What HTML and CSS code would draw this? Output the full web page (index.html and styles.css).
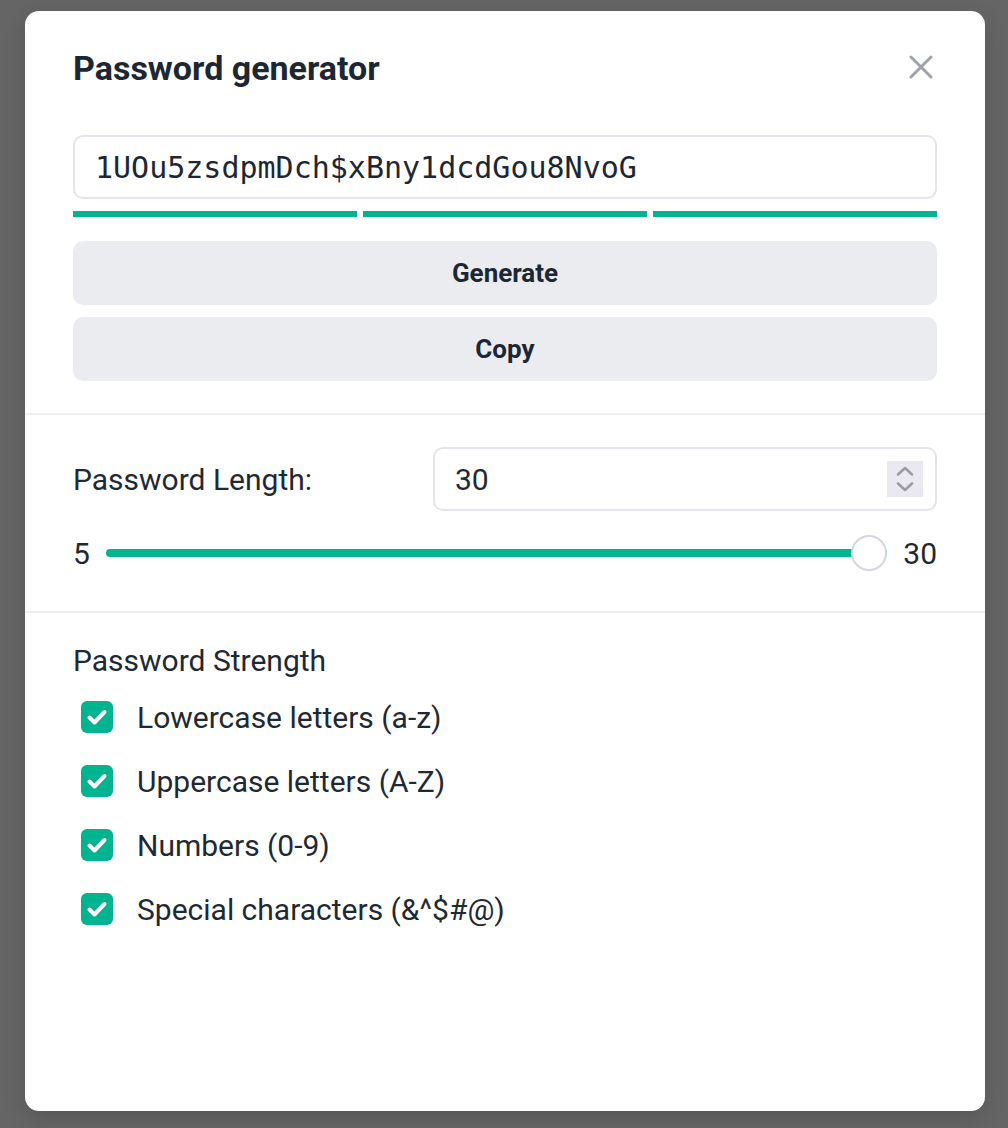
FILE: index.html
```html
<!DOCTYPE html>
<html lang="en">
<head>
<meta charset="utf-8">
<title>Password generator</title>
<link rel="stylesheet" href="styles.css">
</head>
<body>
<div class="overlay">
  <div class="modal">
    <header class="head">
      <h2 class="title">Password generator</h2>
      <button class="close" aria-label="Close">
        <svg viewBox="0 0 24 24" width="24" height="24"><path d="M2 2 L22 22 M22 2 L2 22" stroke="#9ea2a9" stroke-width="3" stroke-linecap="round" fill="none"/></svg>
      </button>
    </header>

    <section class="sec sec-top">
      <div class="pw-field">1UOu5zsdpmDch$xBny1dcdGou8NvoG</div>
      <div class="bars"><span></span><span></span><span></span></div>
      <button class="btn btn-gen">Generate</button>
      <button class="btn btn-copy">Copy</button>
    </section>

    <div class="divider"></div>

    <section class="sec sec-length">
      <div class="len-row">
        <label class="len-label">Password Length:</label>
        <div class="num-input">
          <span class="num-val">30</span>
          <span class="spin">
            <svg viewBox="0 0 36 36" width="36" height="36"><path d="M11 13.5 L18 7 L25 13.5 M11 22.5 L18 29 L25 22.5" stroke="#9c9aa5" stroke-width="2.6" stroke-linecap="round" stroke-linejoin="round" fill="none"/></svg>
          </span>
        </div>
      </div>
      <div class="slider-row">
        <span class="s-min">5</span>
        <div class="track">
          <div class="fill"></div>
          <div class="thumb"></div>
        </div>
        <span class="s-max">30</span>
      </div>
    </section>

    <div class="divider"></div>

    <section class="sec sec-strength">
      <div class="heading">Password Strength</div>
      <ul class="checks">
        <li class="check-row"><span class="box"><svg viewBox="0 0 32 32" width="32" height="32"><path d="M8.5 16.5 L13.5 21.5 L23.5 11" stroke="#fff" stroke-width="4" stroke-linecap="round" stroke-linejoin="round" fill="none"/></svg></span><span class="lbl">Lowercase letters (a-z)</span></li>
        <li class="check-row"><span class="box"><svg viewBox="0 0 32 32" width="32" height="32"><path d="M8.5 16.5 L13.5 21.5 L23.5 11" stroke="#fff" stroke-width="4" stroke-linecap="round" stroke-linejoin="round" fill="none"/></svg></span><span class="lbl">Uppercase letters (A-Z)</span></li>
        <li class="check-row"><span class="box"><svg viewBox="0 0 32 32" width="32" height="32"><path d="M8.5 16.5 L13.5 21.5 L23.5 11" stroke="#fff" stroke-width="4" stroke-linecap="round" stroke-linejoin="round" fill="none"/></svg></span><span class="lbl">Numbers (0-9)</span></li>
        <li class="check-row"><span class="box"><svg viewBox="0 0 32 32" width="32" height="32"><path d="M8.5 16.5 L13.5 21.5 L23.5 11" stroke="#fff" stroke-width="4" stroke-linecap="round" stroke-linejoin="round" fill="none"/></svg></span><span class="lbl">Special characters (&amp;^$#@)</span></li>
      </ul>
    </section>
  </div>
</div>
</body>
</html>
```

FILE: styles.css
```css
* { box-sizing: border-box; }

html, body {
  margin: 0;
  padding: 0;
}

body {
  background: #656565;
  font-family: Roboto, "Liberation Sans", sans-serif;
  color: #1f2933;
  width: 1008px;
  height: 1128px;
  overflow: hidden;
}

.overlay {
  padding: 11px 23px 0 25px;
}

.modal {
  width: 960px;
  height: 1100px;
  background: #fff;
  border-radius: 14px;
  box-shadow: 0 8px 22px rgba(0, 0, 0, 0.14);
  display: flex;
  flex-direction: column;
}

.head {
  display: flex;
  align-items: center;
  justify-content: space-between;
  padding: 35px 52px 0 48px;
}

.title {
  margin: 0;
  font-size: 34px;
  line-height: 44px;
  font-weight: 700;
  color: #1d2733;
}

.close {
  border: 0;
  background: transparent;
  padding: 0;
  width: 24px;
  height: 24px;
  display: flex;
  margin-top: -2px;
}

.sec {
  padding: 0 48px;
}

.sec-top {
  padding-top: 45px;
  padding-bottom: 32px;
  display: flex;
  flex-direction: column;
}

.pw-field {
  height: 64px;
  border: 2px solid #e2e5eb;
  border-radius: 10px;
  padding: 0 20px;
  display: flex;
  align-items: center;
  font-family: "DejaVu Sans Mono", "Liberation Mono", monospace;
  font-size: 30px;
  color: #1d2733;
}

.bars {
  margin-top: 12px;
  display: flex;
  gap: 6px;
}

.bars span {
  flex: 1;
  height: 6px;
  background: #00b490;
}

.btn {
  height: 64px;
  border: 0;
  border-radius: 10px;
  background: #ebecf0;
  font-family: Roboto, "Liberation Sans", sans-serif;
  font-weight: 700;
  font-size: 26px;
  color: #1d2733;
  padding: 0;
}

.btn-gen { margin-top: 24px; }
.btn-copy { margin-top: 12px; }

.divider {
  height: 2px;
  background: #eeeff3;
  flex: none;
}

.sec-length {
  padding-top: 32px;
  padding-bottom: 40px;
}

.len-row {
  display: flex;
  align-items: center;
  justify-content: space-between;
}

.len-label {
  font-size: 30px;
}

.num-input {
  width: 504px;
  height: 64px;
  border: 2px solid #e2e5eb;
  border-radius: 10px;
  display: flex;
  align-items: center;
  justify-content: space-between;
  padding: 0 12px 0 20px;
}

.num-val {
  font-size: 30px;
}

.spin {
  width: 36px;
  height: 36px;
  background: #e9e9ef;
  display: flex;
}

.slider-row {
  margin-top: 24px;
  height: 36px;
  display: flex;
  align-items: center;
  gap: 16px;
  font-size: 30px;
}

.s-min { width: 17px; }

.track {
  flex: 1;
  height: 36px;
  position: relative;
  display: flex;
  align-items: center;
}

.fill {
  width: 100%;
  height: 8px;
  border-radius: 4px;
  background: #00b490;
}

.thumb {
  position: absolute;
  right: 0;
  top: 0;
  width: 36px;
  height: 36px;
  border-radius: 50%;
  background: #fff;
  border: 2px solid #d3d7df;
}

.sec-strength {
  padding-top: 30px;
}

.heading {
  font-size: 30px;
  line-height: 36px;
}

.checks {
  list-style: none;
  margin: 6px 0 0;
  padding: 0;
}

.check-row {
  height: 64px;
  display: flex;
  align-items: center;
  gap: 24px;
  padding-left: 8px;
}

.box {
  width: 32px;
  height: 32px;
  border-radius: 6px;
  background: #00b490;
  display: flex;
}

.lbl {
  font-size: 30px;
}
```
